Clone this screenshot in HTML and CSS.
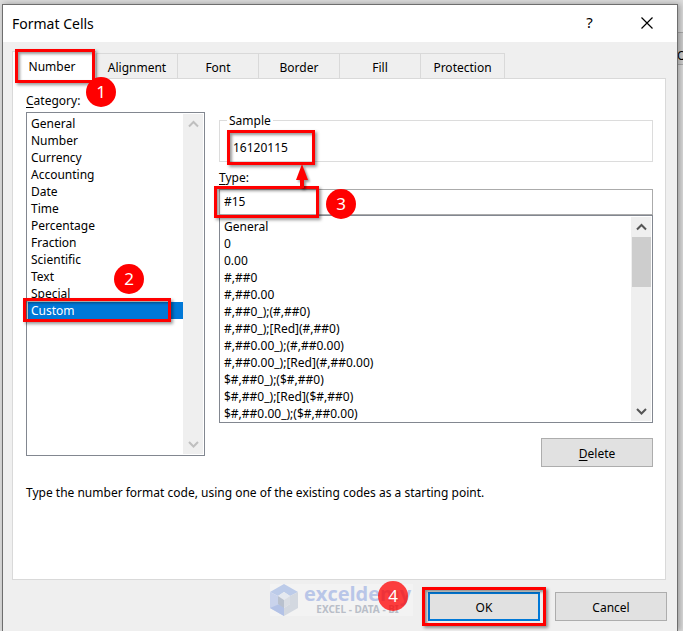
FILE: index.html
```
<!DOCTYPE html>
<html lang="en">
  <head>
    <meta charset="utf-8" />
    <title>Format Cells</title>
    <meta name="viewport" content="width=device-width, initial-scale=1.0" />
    <link rel="stylesheet" href="styles.css">
  </head>
  <body>
    <div class="sheet-edge" aria-hidden="true">O</div>
    <div class="dialog" role="dialog" aria-labelledby="title">
      <header class="titlebar">
        <h1 id="title">Format Cells</h1>
        <button class="title-button" type="button" aria-label="Help">?</button>
        <button class="title-button" type="button" aria-label="Close">
          <svg width="12" height="12" viewBox="0 0 12 12">
            <path d="M0.5 0.5L11.5 11.5M11.5 0.5L0.5 11.5" stroke="#000" stroke-width="1.2" fill="none" />
          </svg>
        </button>
      </header>

      <main class="content">
        <div class="tabs" role="tablist">
          <button class="tab active" type="button" role="tab" aria-selected="true">Number
            <span class="mark mark-tab"></span>
            <span class="step step-1">1</span>
          </button>
          <button class="tab" type="button" role="tab">Alignment</button>
          <button class="tab" type="button" role="tab">Font</button>
          <button class="tab" type="button" role="tab">Border</button>
          <button class="tab" type="button" role="tab">Fill</button>
          <button class="tab last" type="button" role="tab">Protection</button>
        </div>

        <div class="panel" role="tabpanel">
          <div class="columns">
            <div class="category">
              <label for="category"><u>C</u>ategory:</label>
              <div class="listbox category-list">
                <select id="category" size="20">
                  <option>General</option>
                  <option>Number</option>
                  <option>Currency</option>
                  <option>Accounting</option>
                  <option>Date</option>
                  <option>Time</option>
                  <option>Percentage</option>
                  <option>Fraction</option>
                  <option>Scientific</option>
                  <option>Text</option>
                  <option>Special</option>
                  <option selected>Custom</option>
                </select>
                <div class="scrollbar disabled">
                  <svg width="11" height="20" viewBox="0 0 11 20"><path d="M1 12.5L5.5 8L10 12.5" /></svg>
                  <svg width="11" height="20" viewBox="0 0 11 20"><path d="M1 8L5.5 12.5L10 8" /></svg>
                </div>
                <span class="mark mark-custom"></span>
                <span class="step step-2">2</span>
              </div>
            </div>

            <div class="format">
              <fieldset class="sample">
                <legend>Sample</legend>
                <output>16120115</output>
                <span class="mark mark-sample"></span>
              </fieldset>
              <label for="type"><u>T</u>ype:</label>
              <div class="type">
                <input id="type" type="text" value="#15" />
                <span class="mark mark-type"></span>
                <svg class="arrow" width="14" height="24" viewBox="0 0 14 24">
                  <path d="M7 0L13 16H9V24H5V16H1Z" fill="#f00" />
                </svg>
                <span class="step step-3">3</span>
              </div>
              <div class="listbox codes-list">
                <select size="12" aria-label="Format codes">
                  <option>General</option>
                  <option>0</option>
                  <option>0.00</option>
                  <option>#,##0</option>
                  <option>#,##0.00</option>
                  <option>#,##0_);(#,##0)</option>
                  <option>#,##0_);[Red](#,##0)</option>
                  <option>#,##0.00_);(#,##0.00)</option>
                  <option>#,##0.00_);[Red](#,##0.00)</option>
                  <option>$#,##0_);($#,##0)</option>
                  <option>$#,##0_);[Red]($#,##0)</option>
                  <option>$#,##0.00_);($#,##0.00)</option>
                </select>
                <div class="scrollbar">
                  <svg width="11" height="20" viewBox="0 0 11 20"><path d="M1 12.5L5.5 8L10 12.5" /></svg>
                  <div class="thumb"></div>
                  <svg width="11" height="20" viewBox="0 0 11 20"><path d="M1 8L5.5 12.5L10 8" /></svg>
                </div>
              </div>
              <button class="button delete" type="button"><span><u>D</u>elete</span></button>
            </div>
          </div>
          <p class="hint">Type the number format code, using one of the existing codes as a starting point.</p>
        </div>
      </main>

      <footer class="footer">
        <div class="brand">
          <svg width="28" height="32" viewBox="0 0 28 32">
            <path d="M14 0L28 8L20 12L14 8L8 12L0 8Z" fill="#bccbe9" />
            <path d="M0 8L8 12V20L14 24V32L0 24Z" fill="#c9d3ec" />
            <path d="M0 24L14 18V32Z" fill="#b3c2e6" />
            <path d="M28 8V24L14 32V24L20 20V12Z" fill="#d3d8e0" />
            <path d="M14 8L20 12L14 16L8 12Z" fill="#e5e9f0" />
            <path d="M8 12L14 16V24L8 20Z" fill="#b9c1ce" />
            <path d="M20 12L14 16V24L20 20Z" fill="#d9dde4" />
          </svg>
          <div class="brand-text">
            <strong>exceldemy</strong>
            <small>EXCEL - DATA - BI</small>
          </div>
          <span class="step step-4">4</span>
        </div>
        <button class="button ok" type="button">OK
          <span class="mark mark-ok"></span>
        </button>
        <button class="button" type="button">Cancel</button>
      </footer>
    </div>
  </body>
</html>
```

FILE: styles.css
```
* {
  box-sizing: border-box;
}
body {
  margin: 0;
  padding: 4px 5px 0 2px;
  background: #dcdcdc;
  color: #000;
  font-family: "Noto Sans", "Open Sans", sans-serif;
  font-size: 12px;
  line-height: 17px;
  overflow: hidden;
}
button,
input,
select {
  font: inherit;
  color: inherit;
}
u {
  text-underline-offset: 2px;
}
.sheet-edge {
  position: absolute;
  top: 32px;
  right: 0;
  width: 6px;
  height: 33px;
  padding-top: 14px;
  border-top: 1px solid #ababab;
  border-bottom: 1px solid #ababab;
  background: #cfcfcf;
  overflow: hidden;
}
.dialog {
  position: relative;
  display: flex;
  flex-direction: column;
  min-height: calc(100vh - 4px);
  border: 1px solid #6e6e6e;
  border-bottom: none;
  background: #efefef;
  box-shadow: 2px 0 6px rgba(0, 0, 0, 0.3);
}
.titlebar {
  display: flex;
  align-items: center;
  height: 37px;
  padding: 0 2px 0 9px;
  background: #fff;
}
.titlebar h1 {
  flex: 1;
  margin: 0;
  font-size: 14px;
  font-weight: normal;
}
.title-button {
  display: flex;
  align-items: center;
  justify-content: center;
  width: 57px;
  height: 37px;
  padding: 0 0 2px;
  border: none;
  background: none;
  font-size: 15px;
}
.content {
  flex: 1;
  display: flex;
  flex-direction: column;
  padding: 9px 11px 0 9px;
}
.tabs {
  display: flex;
  align-items: flex-end;
}
.tab {
  position: relative;
  width: 81px;
  height: 25px;
  padding: 2px 0 0;
  border: 1px solid #d9d9d9;
  border-width: 1px 0 0 1px;
  background: #efefef;
}
.tab.active {
  z-index: 1;
  width: 84px;
  height: 28px;
  margin-bottom: -1px;
  padding: 2px 5px 0 0;
  background: #fff;
}
.tab.last {
  width: 85px;
  border-right-width: 1px;
}
.panel {
  flex: 1;
  padding: 13px 12px 13px 13px;
  border: 1px solid #d9d9d9;
  background: #fff;
}
.columns {
  display: grid;
  grid-template-columns: 179px 1fr;
  gap: 14px;
}
.category label,
.format label {
  display: block;
}
.listbox {
  position: relative;
  display: flex;
  padding: 1px;
  border: 1px solid #828790;
  background: #fff;
}
.listbox select {
  flex: 1;
  min-width: 0;
  padding: 1px 0 0;
  border: none;
  outline: none;
  background: none;
  overflow: hidden;
  scrollbar-width: none;
}
.listbox option {
  min-height: 17px;
  padding: 0 3px;
  line-height: 17px;
}
.listbox option:checked {
  background: #0078d7 linear-gradient(#0078d7, #0078d7);
  color: #fff !important;
}
.category-list {
  height: 344px;
  margin-top: 3px;
}
.codes-list {
  height: 208px;
}
.scrollbar {
  display: flex;
  flex-direction: column;
  align-items: center;
  justify-content: space-between;
  width: 20px;
  background: #efefef;
}
.scrollbar path {
  fill: none;
  stroke: #555;
  stroke-width: 2;
}
.scrollbar.disabled path {
  stroke: #bfbfbf;
}
.thumb {
  width: 19px;
  height: 50px;
  margin-bottom: auto;
  background: #cdcdcd;
}
.format {
  display: flex;
  flex-direction: column;
  padding-top: 20px;
}
.sample {
  position: relative;
  height: 50px;
  margin: 0 0 7px;
  padding: 10px 13px;
  border: 1px solid #dcdcdc;
}
.sample legend {
  margin-left: -6px;
  padding: 0 2px;
}
.sample output {
  display: block;
}
.type {
  position: relative;
  display: flex;
  margin-top: 3px;
}
.type input {
  width: 100%;
  height: 26px;
  padding: 0 4px 2px;
  border: 1px solid #ababab;
  outline: none;
  background: #fff;
}
.button {
  position: relative;
  width: 112px;
  height: 29px;
  padding: 2px 0 0;
  border: 1px solid #adadad;
  background: #e1e1e1;
}
.delete {
  align-self: flex-end;
  margin-top: 15px;
}
.hint {
  margin: 17px 0 0;
}
.footer {
  position: relative;
  display: flex;
  justify-content: flex-end;
  gap: 15px;
  padding: 12px 10px 10px;
}
.ok {
  border: 2px solid #0078d7;
}
.brand {
  position: relative;
  display: flex;
  gap: 6px;
  width: 143px;
  height: 32px;
  margin: -8px 0 0;
  background: #f3f3f3;
}
.brand-text {
  display: flex;
  flex-direction: column;
  color: #b9c6e8;
}
.brand strong {
  font-family: "Open Sans", sans-serif;
  font-size: 20px;
  line-height: 20px;
}
.brand small {
  color: #b9bec8;
  font-size: 10px;
  font-weight: bold;
  line-height: 11px;
  text-align: center;
}

/* walkthrough marks */
.mark {
  position: absolute;
  z-index: 2;
  border: 3px solid #f00;
  box-shadow: 2px 2px 3px rgba(0, 0, 0, 0.4), inset 2px 2px 3px rgba(0, 0, 0, 0.4);
  pointer-events: none;
}
.mark-tab {
  inset: -3px 1px -4px 2px;
}
.mark-custom {
  top: 185px;
  left: -4px;
  width: 148px;
  height: 24px;
}
.mark-sample {
  top: 1px;
  left: 7px;
  width: 88px;
  height: 35px;
}
.mark-type {
  top: -3px;
  left: -5px;
  width: 105px;
  height: 32px;
}
.mark-ok {
  inset: -7px -8px;
}
.arrow {
  position: absolute;
  z-index: 3;
  top: -25px;
  left: 76px;
  filter: drop-shadow(2px 2px 1px rgba(0, 0, 0, 0.4));
}
.step {
  position: absolute;
  z-index: 3;
  width: 30px;
  height: 30px;
  border-radius: 50%;
  background: #f00;
  color: #fff;
  font-size: 17px;
  line-height: 29px;
  text-align: center;
}
.step-1 {
  top: 25px;
  left: 73px;
}
.step-2 {
  top: 151px;
  left: 87px;
}
.step-3 {
  top: 0;
  left: 107px;
}
.step-4 {
  top: -3px;
  left: 108px;
  background: rgba(255, 0, 0, 0.75);
}
```
